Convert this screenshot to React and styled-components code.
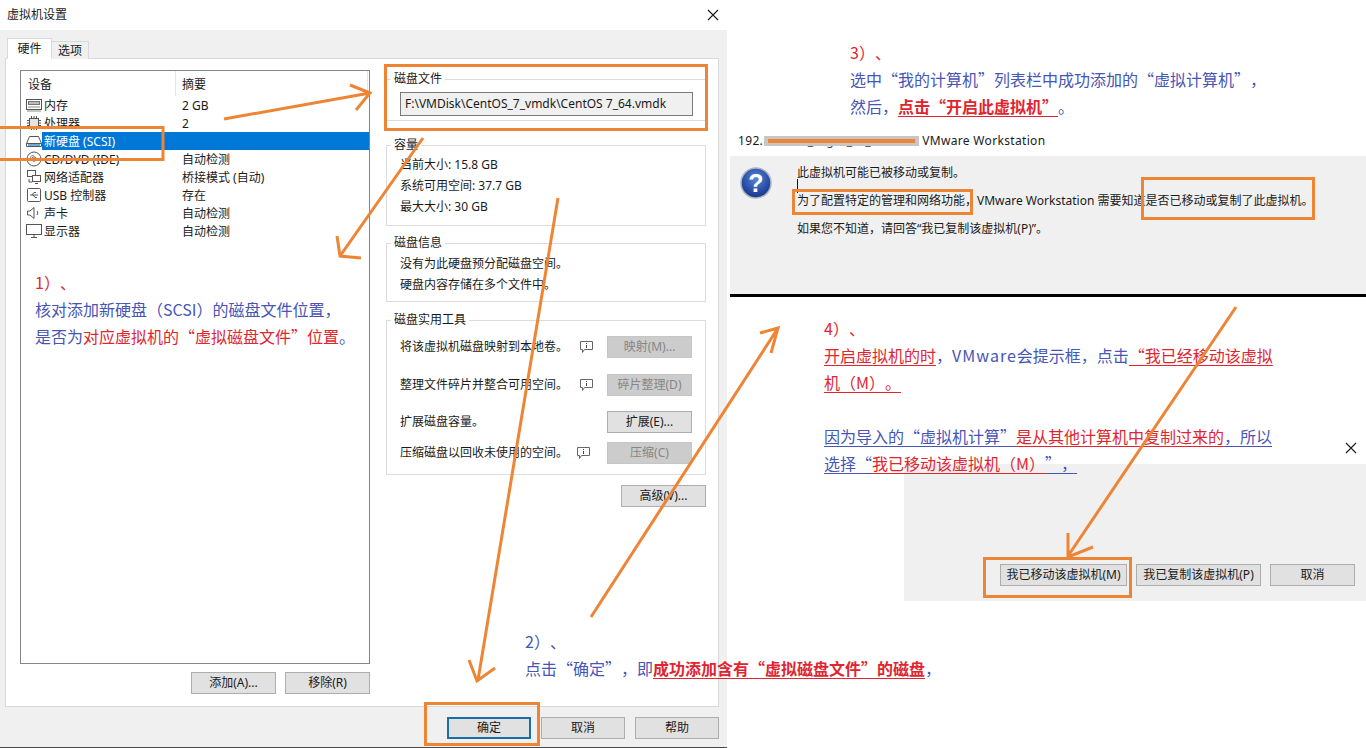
import React from "react";
import styled, { createGlobalStyle } from "styled-components";

const ORANGE = "#ee8535";
const UI_FONT = '"Noto Sans", "Noto Sans CJK SC", sans-serif';
const NOTE_FONT = '"Noto Sans CJK SC", "Noto Sans", sans-serif';

const Global = createGlobalStyle`
  html, body { margin: 0; padding: 0; background: #fff; overflow: hidden; }
  * { box-sizing: border-box; text-spacing-trim: space-all; }
`;

const Page = styled.div`
  position: relative;
  width: 1366px;
  height: 748px;
  display: flex;
  overflow: hidden;
  background: #fff;
  color: #1a1a1a;
  font: 12px/18px ${UI_FONT};
`;

/* ---------- settings dialog ---------- */
const Dialog = styled.section`
  width: 727px;
  height: 748px;
  flex: none;
  display: flex;
  flex-direction: column;
  background: #f0f0f0;
  border-bottom: 1px solid #4a4a4a;
`;

const TitleBar = styled.header`
  height: 30px;
  flex: none;
  background: #fff;
  display: flex;
  align-items: center;
  justify-content: space-between;
  padding: 0 8px 0 7px;
  font-size: 12px;
`;

const CloseGlyph = styled.svg`
  width: 12px;
  height: 12px;
  stroke: #1a1a1a;
  stroke-width: 1.1;
  fill: none;
`;

const TabStrip = styled.div`
  height: 28px;
  flex: none;
  display: flex;
  align-items: flex-end;
  padding: 0 0 0 7px;
  position: relative;
  z-index: 1;
`;

const Tab = styled.div`
  height: ${(p) => (p.$active ? 21 : 18)}px;
  width: ${(p) => (p.$active ? 45 : 37)}px;
  background: ${(p) => (p.$active ? "#fff" : "#f0f0f0")};
  border: 1px solid #d9d9d9;
  border-bottom: ${(p) => (p.$active ? "1px solid #fff" : "none")};
  border-left: ${(p) => (p.$active ? "1px solid #d9d9d9" : "none")};
  margin-bottom: -1px;
  text-align: center;
  line-height: ${(p) => (p.$active ? 19 : 18)}px;
`;

const TabPanel = styled.div`
  width: 714px;
  height: 649px;
  flex: none;
  margin-left: 5px;
  background: #fff;
  border: 1px solid #d9d9d9;
  padding: 11px 0 0 14px;
  display: flex;
  gap: 16px;
`;

const LeftColumn = styled.div`
  width: 350px;
  flex: none;
  display: flex;
  flex-direction: column;
`;

const DeviceList = styled.div`
  height: 594px;
  border: 1px solid #82878f;
  display: flex;
  flex-direction: column;
`;

const ListHeader = styled.div`
  height: 25px;
  flex: none;
  display: flex;
  align-items: center;
  padding-left: 6px;
`;

const HeaderCell = styled.div`
  width: ${(p) => p.$w}px;
  height: 100%;
  display: flex;
  align-items: center;
  padding: 3px 0 0 ${(p) => p.$pad}px;
  border-right: 1px solid #e5e5e5;
`;

const Row = styled.div`
  height: 18px;
  flex: none;
  display: flex;
  align-items: center;
  padding-left: 5px;
`;

const RowBody = styled.div`
  flex: 1;
  height: 18px;
  display: flex;
  padding-left: 2px;
  line-height: 20px;
  background: ${(p) => (p.$selected ? "#0078d7" : "transparent")};
  color: ${(p) => (p.$selected ? "#fff" : "inherit")};
`;

const RowLabel = styled.span`
  width: 138px;
  flex: none;
`;

const RowIcon = styled.svg`
  width: 16px;
  height: 16px;
  flex: none;
  fill: none;
  stroke: #555;
  stroke-width: 1;
`;

const ListActions = styled.div`
  display: flex;
  justify-content: flex-end;
  gap: 9px;
  margin-top: 8px;
`;

const Button = styled.button`
  width: ${(p) => p.$w || 85}px;
  height: 22px;
  padding: 0;
  flex: none;
  font: 12px/18px ${UI_FONT};
  color: ${(p) => (p.disabled ? "#868686" : "#1a1a1a")};
  background: ${(p) => (p.disabled ? "#cccccc" : "#e1e1e1")};
  border: ${(p) => (p.$primary ? "2px solid #1b6ea8" : p.disabled ? "1px solid #c6c6c6" : "1px solid #adadad")};
`;

const RightColumn = styled.div`
  width: 320px;
  flex: none;
  display: flex;
  flex-direction: column;
  margin-top: 1px;
`;

const Group = styled.fieldset`
  margin: 0 0 ${(p) => p.$after}px;
  padding: ${(p) => p.$top || 0}px 13px 0;
  height: ${(p) => p.$h}px;
  flex: none;
  border: 1px solid #dcdcdc;
  min-width: 0;
`;

const GroupTitle = styled.legend`
  padding: 0 3px;
  margin-left: -9px;
  line-height: 16px;
`;

const PathField = styled.div`
  height: 24px;
  margin: 5px -1px 0 0;
  background: #f0f0f0;
  border: 1px solid #7a7a7a;
  padding: 2px 4px;
  white-space: nowrap;
`;

const InfoLine = styled.div`
  height: 21px;
  line-height: 21px;
`;

const ToolRow = styled.div`
  height: ${(p) => p.$h}px;
  display: flex;
  align-items: center;
`;

const ToolText = styled.span`
  flex: 1;
  white-space: nowrap;
`;

const ToolHint = styled.svg`
  width: 15px;
  height: 14px;
  flex: none;
  margin-right: ${(p) => p.$gap}px;
  fill: none;
  stroke: #666;
  stroke-width: 1;
`;

const AdvancedRow = styled.div`
  display: flex;
  justify-content: flex-end;
`;

const Footer = styled.footer`
  flex: 1;
  display: flex;
  justify-content: flex-end;
  gap: 10px;
  padding: 10px 8px 0 0;
`;

/* ---------- right side: callouts and message dialogs ---------- */
const Side = styled.div`
  flex: 1;
  margin-left: 3px;
  display: flex;
  flex-direction: column;
  min-width: 0;
`;

const Note = styled.div`
  font: 16px/27px ${NOTE_FONT};
  color: #4655b6;
  white-space: nowrap;
`;

const TopNote = styled(Note)`
  height: 84px;
  padding: 0 0 0 120px;
  margin-top: 39px;
`;

const Red = styled.span`
  color: #e0252f;
  font-weight: ${(p) => (p.$bold ? 700 : 400)};
  text-decoration: ${(p) => (p.$u ? "underline" : "none")};
  text-decoration-thickness: 1px;
  text-underline-offset: 3px;
`;

const Blue = styled.span`
  color: #4655b6;
  text-decoration: ${(p) => (p.$u ? "underline" : "none")};
  text-decoration-thickness: 1px;
  text-underline-offset: 3px;
`;

const ProductName = styled.span`
  letter-spacing: 1px;
`;

const MessageTitle = styled.div`
  height: 33px;
  flex: none;
  padding: 3px 0 0 8px;
  display: flex;
  align-items: center;
  line-height: 18px;
  white-space: nowrap;
  letter-spacing: 0.33px;
`;

const MaskedName = styled.span`
  position: relative;
  width: 155px;
  height: 18px;
  margin: 0 3px 0 1px;
  flex: none;
  text-align: center;
  color: #444;
  overflow: hidden;
  letter-spacing: 5px;

  &::before {
    content: "";
    position: absolute;
    left: 0;
    right: 0;
    top: 4px;
    height: 10px;
    background: #c6c6c6;
  }
  &::after {
    content: "";
    position: absolute;
    left: 4px;
    right: 4px;
    top: 7px;
    height: 4px;
    background: ${ORANGE};
  }
`;

const MessageBody = styled.div`
  height: 138px;
  flex: none;
  background: #f0f0f0;
  display: flex;
  padding: 11px 0 0 10px;
  gap: 25px;
`;

const MessageIcon = styled.svg`
  width: 32px;
  height: 32px;
  flex: none;
`;

const MessageLines = styled.div`
  position: relative;
  display: flex;
  flex-direction: column;
  white-space: nowrap;
`;

const MessageLine = styled.div`
  height: 28px;
  line-height: 28px;
  margin-top: ${(p) => (p.$first ? -8 : 0)}px;
`;

const Caret = styled.i`
  position: absolute;
  left: 0;
  top: 12px;
  width: 1px;
  height: 14px;
  background: #111;
`;

const Divider = styled.div`
  height: 3px;
  flex: none;
  background: #000;
`;

const LowerNoteArea = styled.div`
  position: relative;
  z-index: 1;
  height: 167px;
  flex: none;
`;

const LowerNote = styled(Note)`
  padding: 18px 0 0 94px;
`;

const SmallClose = styled(CloseGlyph)`
  position: absolute;
  right: 9px;
  bottom: 10px;
`;

const PromptPanel = styled.div`
  height: 137px;
  flex: none;
  margin-left: 174px;
  background: #f0f0f0;
  display: flex;
  justify-content: flex-end;
  align-items: flex-end;
  gap: 9px;
  padding: 0 11px 15px 0;
`;

/* Callouts that sit on top of the dialog */
const ListNote = styled(Note)`
  position: absolute;
  left: 35px;
  top: 269px;
`;

const OkNote = styled(Note)`
  position: absolute;
  left: 525px;
  top: 628px;
  z-index: 3;
`;

const Markup = styled.svg`
  position: absolute;
  left: 0;
  top: 0;
  width: 1366px;
  height: 748px;
  z-index: 2;
  pointer-events: none;
  fill: none;
  stroke: ${ORANGE};
  stroke-width: 3;
`;

const devices = [
  ["内存", "2 GB", "mem"],
  ["处理器", "2", "cpu"],
  ["新硬盘 (SCSI)", "", "disk", true],
  ["CD/DVD (IDE)", "自动检测", "cd"],
  ["网络适配器", "桥接模式 (自动)", "net"],
  ["USB 控制器", "存在", "usb"],
  ["声卡", "自动检测", "snd"],
  ["显示器", "自动检测", "mon"],
];

const iconShapes = {
  mem: (
    <>
      <rect x="0.5" y="2.5" width="15" height="10" />
      <rect x="2.5" y="4.5" width="11" height="3" fill="#bcbcbc" stroke="#777" />
      <path d="M2 10h12M1 14h14" stroke="#8a8a8a" />
    </>
  ),
  cpu: (
    <>
      <rect x="3.5" y="3.5" width="9" height="9" fill="#e4e4e4" />
      <path d="M5.500 1v2M8 1v2M10.500 1v2M5.500 13v2M8 13v2M10.500 13v2M1 5.500h2M1 8h2M1 10.500h2M13 5.500h2M13 8h2M13 10.500h2" />
    </>
  ),
  disk: (
    <>
      <path d="M3.500 3.500h9l3 7v3h-15v-3z" />
      <path d="M0.500 10.500h15" />
      <path d="M2 12h12" stroke="#3a8fd0" strokeWidth="1.500" />
    </>
  ),
  cd: (
    <>
      <circle cx="8" cy="8" r="7" />
      <circle cx="8" cy="8" r="2.200" />
      <path d="M4 8a4 4 0 0 1 4-4" stroke="#999" />
    </>
  ),
  net: (
    <>
      <rect x="1.500" y="1.500" width="8" height="6" />
      <rect x="6.500" y="6.500" width="8" height="6" fill="#fff" />
      <path d="M3 10v3h3M9 14.500h3" />
    </>
  ),
  usb: (
    <>
      <rect x="1.500" y="1.500" width="13" height="13" rx="1" />
      <path d="M4 8h8M6 8l2-2.500h2M7 8l2 2.500h2" />
    </>
  ),
  snd: (
    <>
      <path d="M1.500 6v4h2.500l4 3.500v-11l-4 3.500z" />
      <path d="M11 6a3 3 0 0 1 0 4" />
    </>
  ),
  mon: (
    <>
      <rect x="0.500" y="1.500" width="15" height="10" />
      <path d="M5 14.500h6M8 11.500v3" />
    </>
  ),
};

const Hint = ({ gap }) => (
  <ToolHint viewBox="0 0 15 14" $gap={gap}>
    <path d="M1.500 1.500h12v8h-8l-2 3v-3h-2z" />
    <path d="M7.500 3v1M7.500 5v3" stroke="#444" />
  </ToolHint>
);

const Close = ({ as: Comp = CloseGlyph }) => (
  <Comp viewBox="0 0 12 12">
    <path d="M1 1l10 10M11 1L1 11" />
  </Comp>
);

export default function App() {
  return (
    <Page lang="zh-CN">
      <Global />
      <Dialog>
        <TitleBar>
          <span>虚拟机设置</span>
          <Close />
        </TitleBar>
        <TabStrip>
          <Tab $active>硬件</Tab>
          <Tab>选项</Tab>
        </TabStrip>
        <TabPanel>
          <LeftColumn>
            <DeviceList>
              <ListHeader>
                <HeaderCell $w={149} $pad={1}>设备</HeaderCell>
                <HeaderCell $w={192} $pad={6}>摘要</HeaderCell>
              </ListHeader>
              {devices.map(([name, summary, icon, selected]) => (
                <Row key={name}>
                  <RowIcon viewBox="0 0 16 16">{iconShapes[icon]}</RowIcon>
                  <RowBody $selected={selected}>
                    <RowLabel>{name}</RowLabel>
                    <span>{summary}</span>
                  </RowBody>
                </Row>
              ))}
            </DeviceList>
            <ListActions>
              <Button>添加(A)...</Button>
              <Button>移除(R)</Button>
            </ListActions>
          </LeftColumn>
          <RightColumn>
            <Group $h={50} $after={16}>
              <GroupTitle>磁盘文件</GroupTitle>
              <PathField>F:\VMDisk\CentOS_7_vmdk\CentOS 7_64.vmdk</PathField>
            </Group>
            <Group $h={89} $after={9} $top={1}>
              <GroupTitle>容量</GroupTitle>
              <InfoLine>当前大小: 15.8 GB</InfoLine>
              <InfoLine>系统可用空间: 37.7 GB</InfoLine>
              <InfoLine>最大大小: 30 GB</InfoLine>
            </Group>
            <Group $h={67} $after={10} $top={2}>
              <GroupTitle>磁盘信息</GroupTitle>
              <InfoLine>没有为此硬盘预分配磁盘空间。</InfoLine>
              <InfoLine>硬盘内容存储在多个文件中。</InfoLine>
            </Group>
            <Group $h={163} $after={10} $top={4}>
              <GroupTitle>磁盘实用工具</GroupTitle>
              <ToolRow $h={30}>
                <ToolText>将该虚拟机磁盘映射到本地卷。</ToolText>
                <Hint gap={13} />
                <Button disabled>映射(M)...</Button>
              </ToolRow>
              <ToolRow $h={46}>
                <ToolText>整理文件碎片并整合可用空间。</ToolText>
                <Hint gap={13} />
                <Button disabled>碎片整理(D)</Button>
              </ToolRow>
              <ToolRow $h={28}>
                <ToolText>扩展磁盘容量。</ToolText>
                <Button>扩展(E)...</Button>
              </ToolRow>
              <ToolRow $h={34}>
                <ToolText>压缩磁盘以回收未使用的空间。</ToolText>
                <Hint gap={16} />
                <Button disabled>压缩(C)</Button>
              </ToolRow>
            </Group>
            <AdvancedRow>
              <Button>高级(V)...</Button>
            </AdvancedRow>
          </RightColumn>
        </TabPanel>
        <Footer>
          <Button $w={84} $primary>确定</Button>
          <Button $w={84}>取消</Button>
          <Button $w={84}>帮助</Button>
        </Footer>
      </Dialog>

      <Side>
        <TopNote>
          <Red>3）、</Red>
          <br />
          选中“我的计算机”列表栏中成功添加的“虚拟计算机”，
          <br />
          然后，<Red $bold $u>点击“开启此虚拟机”</Red>。
        </TopNote>
        <MessageTitle>
          192.
          <MaskedName>_ g _ _</MaskedName>
          VMware Workstation
        </MessageTitle>
        <MessageBody>
          <MessageIcon viewBox="0 0 32 32">
            <defs>
              <radialGradient id="orb" cx="50%" cy="35%" r="70%">
                <stop offset="0" stopColor="#5c86d8" />
                <stop offset="0.6" stopColor="#2a4fa8" />
                <stop offset="1" stopColor="#14307c" />
              </radialGradient>
            </defs>
            <circle cx="16" cy="16" r="15" fill="url(#orb)" stroke="#a9b4c4" strokeWidth="1.500" />
            <text x="16" y="25" fontFamily="Liberation Sans" fontSize="25" fontWeight="700" fill="#fff" textAnchor="middle">?</text>
          </MessageIcon>
          <MessageLines>
            <Caret />
            <MessageLine $first>此虚拟机可能已被移动或复制。</MessageLine>
            <MessageLine>为了配置特定的管理和网络功能，VMware Workstation 需要知道是否已移动或复制了此虚拟机。</MessageLine>
            <MessageLine>如果您不知道，请回答“我已复制该虚拟机(P)”。</MessageLine>
          </MessageLines>
        </MessageBody>
        <Divider />
        <LowerNoteArea>
          <LowerNote>
            <Red>4）、</Red>
            <br />
            <Red $u>开启虚拟机的时</Red>，<ProductName>VMware</ProductName>会提示框，点击<Red $u>“我已经移动该虚拟</Red>
            <br />
            <Red $u>机（M）。</Red>
            <br />
            <br />
            <Blue $u>因为导入的“虚拟机计算”</Blue><Red $u>是从其他计算机中复制过来的</Red><Blue $u>，所以</Blue>
            <br />
            <Blue $u>选择“</Blue><Red $u>我已移动该虚拟机（M）</Red><Blue $u>”，</Blue>
          </LowerNote>
          <Close as={SmallClose} />
        </LowerNoteArea>
        <PromptPanel>
          <Button $w={127}>我已移动该虚拟机(M)</Button>
          <Button $w={125}>我已复制该虚拟机(P)</Button>
          <Button>取消</Button>
        </PromptPanel>
      </Side>

      <ListNote>
        <Red>1）、</Red>
        <br />
        核对添加新硬盘（SCSI）的磁盘文件位置，
        <br />
        是否为<Red>对应虚拟机的“虚拟磁盘文件”位置</Red>。
      </ListNote>
      <OkNote>
        2）、
        <br />
        点击“确定”，即<Red $bold $u>成功添加含有“虚拟磁盘文件”的磁盘</Red>，
      </OkNote>

      <Markup viewBox="0 0 1366 748">
        <rect x="-3" y="127.500" width="166" height="32" />
        <rect x="385.500" y="65.500" width="321" height="64" />
        <rect x="425.500" y="703.500" width="113" height="41" />
        <rect x="793.500" y="190.500" width="178" height="23" />
        <rect x="1142.500" y="178.500" width="171" height="40" />
        <rect x="984.500" y="558.500" width="146" height="38" />
        <path d="M224 119L370 93M350 85l20 8l-14 17" />
        <path d="M423 138L340 256M337 236l3 20l21 2" />
        <path d="M558 198L478 680M469 660l8 21l18-13" />
        <path d="M591 617L778 328M760 333l18-5l-7 25" />
        <path d="M1236 307L1068 556M1068 533l0 24l25-10" />
      </Markup>
    </Page>
  );
}
